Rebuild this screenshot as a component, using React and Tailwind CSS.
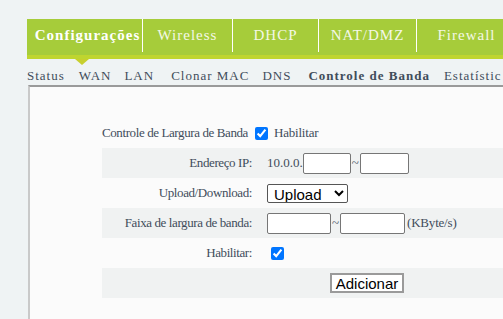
import React from "react";

const tabs = [
  { label: "Configurações", w: "w-[115px]", active: true },
  { label: "Wireless", w: "w-[90px]" },
  { label: "DHCP", w: "w-[86px]" },
  { label: "NAT/DMZ", w: "w-[98px]" },
  { label: "Firewall", w: "w-[100px]" },
];

const subs = [
  { label: "Status", cls: "" },
  { label: "WAN", cls: "ml-[14px]" },
  { label: "LAN", cls: "ml-[13px]" },
  { label: "Clonar MAC", cls: "ml-[17px]" },
  { label: "DNS", cls: "ml-[13px]" },
  { label: "Controle de Banda", cls: "ml-[17px] font-bold" },
  { label: "Estatístic", cls: "ml-[14px]" },
];

function Row({ label, gray, children }) {
  return (
    <div className={`flex items-center h-[30px] ${gray ? "bg-[#f0f2f2]" : ""}`}>
      <div className="w-[150px] text-right shrink-0 tracking-[-0.4px]">{label}</div>
      <div className="flex items-center pl-[15px]">{children}</div>
    </div>
  );
}

function Box({ w }) {
  return <input type="text" className={`${w} h-[21px] border border-[#767676] rounded-[2px] bg-white`} />;
}

export default function App() {
  return (
    <div
      className="w-[503px] h-[319px] overflow-hidden bg-[#eff3f4] text-[#3f4d5b]"
      style={{ fontFamily: '"Liberation Serif", serif' }}
    >
      <div className="pt-[19px] pl-[27px] w-[560px]">
        <div className="bg-[#a6cc3a]">
          <div className="flex h-[36px]">
            {tabs.map((t, i) => (
              <div
                key={t.label}
                className={`${t.w} shrink-0 flex justify-center pt-[5px] text-[15px] tracking-[1px] ${
                  i > 0 ? "border-l border-white mb-[3px]" : ""
                } ${t.active ? "font-bold text-white pl-[6px] tracking-[0.8px]" : "text-[#f4f8e6]"}`}
              >
                <span>{t.label}</span>
              </div>
            ))}
          </div>
          <div className="h-[4px] bg-[#bfd52f]" />
        </div>
        <div className="relative h-[26px] flex items-center text-[13px] tracking-[1px] pt-[7px]">
          <div className="absolute left-[48px] top-0 w-0 h-0 border-l-[7px] border-r-[7px] border-t-[6px] border-l-transparent border-r-transparent border-t-[#c7cf2e]" />
          {subs.map((s) => (
            <span key={s.label} className={`whitespace-nowrap ${s.cls}`}>
              {s.label}
            </span>
          ))}
        </div>
      </div>
      <div className="ml-[28px] border-t-2 border-t-[#9a9a9a] border-l-2 border-l-[#c9c9c9] bg-[#fbfbfb] h-[240px] w-[520px]">
        <div className="pl-[72px] pt-[38px] text-[13px]">
          <div className="flex items-center h-[16px]">
            <span className="tracking-[-0.4px]">Controle de Largura de Banda</span>
            <input type="checkbox" defaultChecked className="ml-[7px] w-[13px] h-[13px]" />
            <span className="ml-[6px] tracking-[-0.2px]">Habilitar</span>
          </div>
          <div className="mt-[7px] w-[420px]">
            <Row label="Endereço IP:" gray>
              <span>10.0.0.</span>
              <Box w="w-[48px]" />
              <span className="px-[1px]">~</span>
              <Box w="w-[49px]" />
            </Row>
            <Row label="Upload/Download:">
              <select
                className="w-[81px] h-[19px] border border-[#555] rounded-[2px] bg-white text-[15px] text-black px-[2px]"
                style={{ fontFamily: '"Liberation Sans", sans-serif' }}
                defaultValue="Upload"
              >
                <option>Upload</option>
                <option>Download</option>
              </select>
            </Row>
            <Row label="Faixa de largura de banda:" gray>
              <Box w="w-[64px]" />
              <span className="px-[1px]">~</span>
              <Box w="w-[65px]" />
              <span className="ml-[2px] tracking-[-0.2px]">(KByte/s)</span>
            </Row>
            <Row label="Habilitar:">
              <input type="checkbox" defaultChecked className="ml-[4px] w-[13px] h-[13px]" />
            </Row>
            <div className="flex items-center h-[30px] bg-[#f0f2f2]">
              <button
                className="ml-[228px] w-[74px] h-[20px] bg-white border-2 border-[#9a9a9a] text-[15px] text-black leading-none"
                style={{ fontFamily: '"Liberation Sans", sans-serif' }}
              >
                Adicionar
              </button>
            </div>
          </div>
        </div>
      </div>
    </div>
  );
}
